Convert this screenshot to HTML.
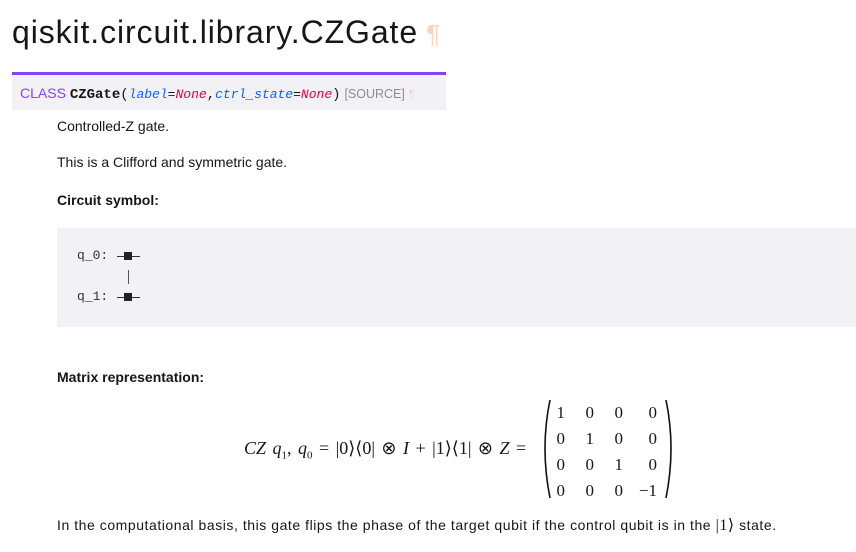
<!DOCTYPE html>
<html><head><meta charset="utf-8"><style>
body{margin:0;width:856px;height:552px;background:#fff;font-family:"Liberation Sans",sans-serif;color:#161616;position:relative;overflow:hidden}
.a{position:absolute;white-space:nowrap}
.t{font-size:14px}
.m{font-family:"Liberation Serif",serif;font-size:18px}
.mono{font-family:"Liberation Mono",monospace}
.c{position:absolute;width:30px;text-align:right}
</style></head><body>
<div class="a" style="left:12px;top:14px;font-size:32px;color:#161616;letter-spacing:0.9px">qiskit.circuit.library.CZGate<span style="color:#fcd3bd;font-size:26px"> ¶</span></div>
<div class="a" style="left:12px;top:72px;width:434px;height:35px;background:#f2f2f6;border-top:3px solid #8a3ffc"></div>
<div class="a" style="left:20px;top:85px;font-size:14px"><span style="color:#8a3ffc">CLASS</span> <b class="mono" style="font-size:14px">CZGate</b><span class="mono">(</span><i class="mono" style="color:#0f62fe;font-size:13px">label</i><span class="mono" style="font-size:13px">=</span><i class="mono" style="color:#e0004d;font-size:13px">None</i><span class="mono">,</span><i class="mono" style="color:#0f62fe;font-size:13px">ctrl_state</i><span class="mono" style="font-size:13px">=</span><i class="mono" style="color:#e0004d;font-size:13px">None</i><span class="mono">)</span> <span style="color:#8d8d8d;font-size:12.5px">[SOURCE]</span> <span style="color:#fcd3bd;font-size:12px">¶</span></div>
<div class="a t" style="left:57px;top:118px">Controlled-Z gate.</div>
<div class="a t" style="left:57px;top:154px">This is a Clifford and symmetric gate.</div>
<div class="a t" style="left:57px;top:192px;font-weight:bold">Circuit symbol:</div>
<div class="a" style="left:57px;top:228px;width:799px;height:99px;background:#f2f2f6"></div>
<div class="a mono" style="left:77px;top:248px;font-size:13px;color:#333">q_0:</div>
<div class="a mono" style="left:77px;top:289px;font-size:13px;color:#333">q_1:</div>
<div class="a" style="left:117px;top:256px;width:23px;height:1px;background:#333"></div>
<div class="a" style="left:124px;top:252px;width:8px;height:8px;background:#222"></div>
<div class="a" style="left:128px;top:270px;width:1px;height:14px;background:#555"></div>
<div class="a" style="left:117px;top:297px;width:23px;height:1px;background:#333"></div>
<div class="a" style="left:124px;top:293px;width:8px;height:8px;background:#222"></div>
<div class="a t" style="left:57px;top:369px;font-weight:bold">Matrix representation:</div>
<div class="a m" style="left:244px;top:438px;word-spacing:2px"><i>CZ</i> <i>q</i><sub style="font-size:11px">1</sub>, <i>q</i><sub style="font-size:11px">0</sub> = |0⟩⟨0| ⊗ <i>I</i> + |1⟩⟨1| ⊗ <i>Z</i> =</div>
<svg class="a" style="left:538px;top:398px" width="140" height="102"><path d="M12 2 Q2 50 12 100" stroke="#111" stroke-width="1.6" fill="none"/><path d="M128 2 Q138 50 128 100" stroke="#111" stroke-width="1.6" fill="none"/></svg>
<div class="a m" style="left:0;top:400px;line-height:26px;font-size:17px">
<div class="c" style="left:535px">1<br>0<br>0<br>0</div>
<div class="c" style="left:564px">0<br>1<br>0<br>0</div>
<div class="c" style="left:593px">0<br>0<br>1<br>0</div>
<div class="c" style="left:627px">0<br>0<br>0<br>−1</div>
</div>
<div class="a t" style="left:57px;top:515px;letter-spacing:0.55px">In the computational basis, this gate flips the phase of the target qubit if the control qubit is in the <span style="font-family:'Liberation Serif',serif;font-size:16px">|1⟩</span> state.</div>
</body></html>
